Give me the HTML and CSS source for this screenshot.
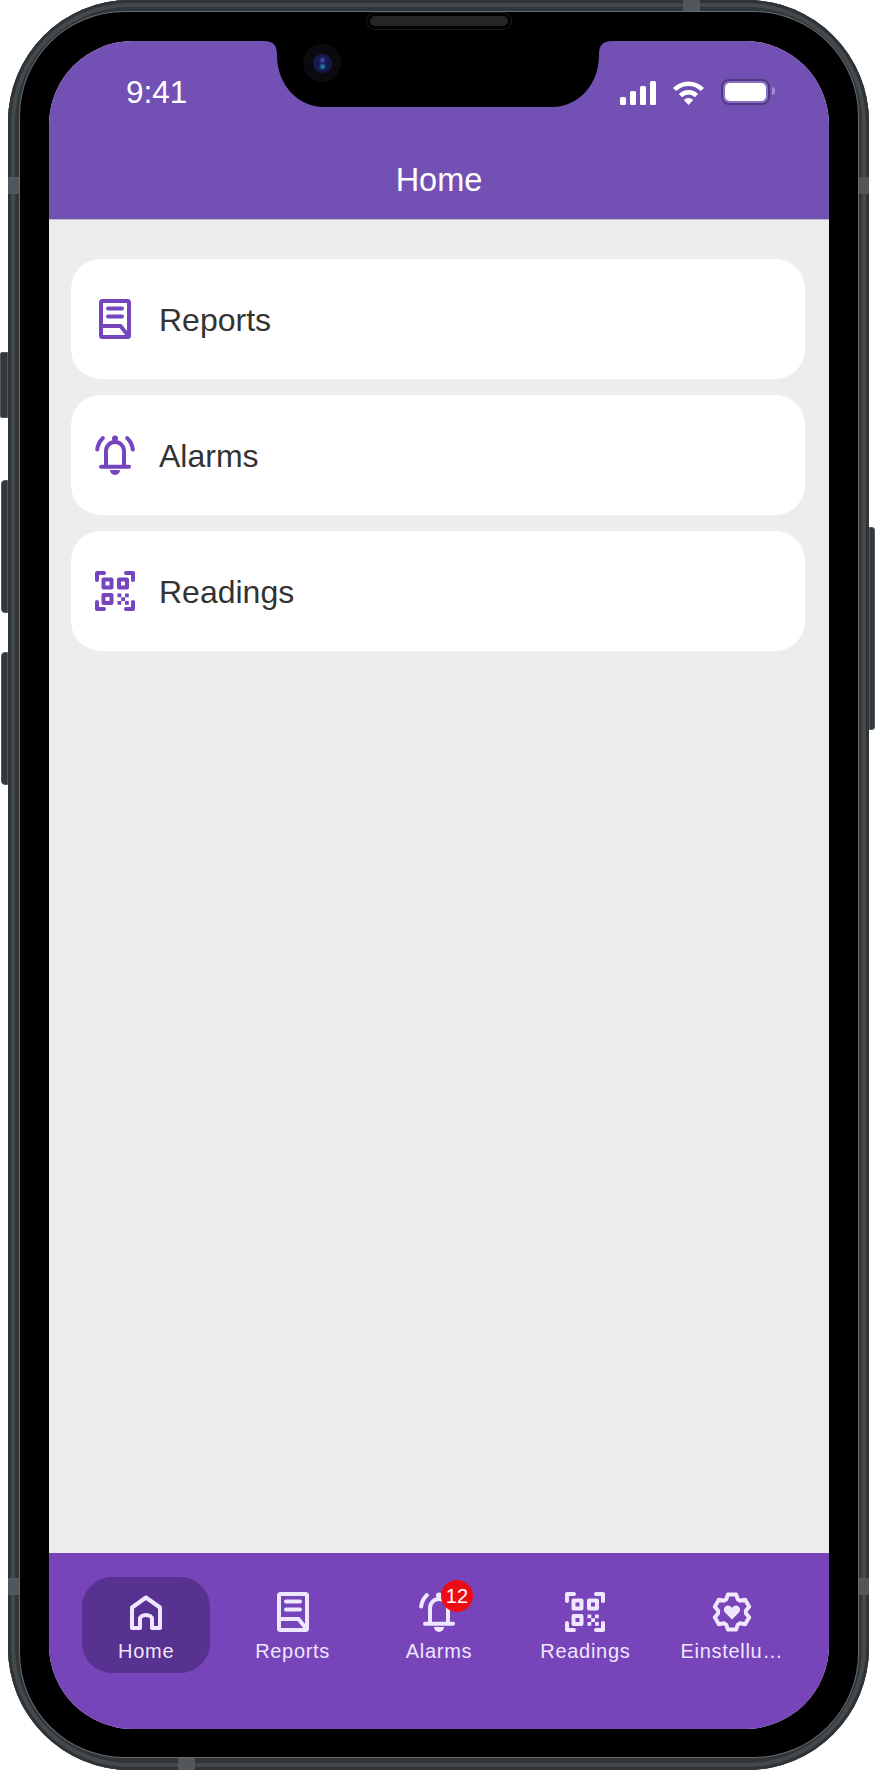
FILE: index.html
```html
<!DOCTYPE html>
<html lang="en">
<head>
    <meta charset="UTF-8">
    <meta name="viewport" content="width=device-width, initial-scale=1.0">
    <title>Home</title>
    <link rel="stylesheet" href="styles.css">
</head>
<body>
    <!-- icon sprite, all drawn on a 40x40 box -->
    <svg class="sprite" aria-hidden="true">
        <symbol id="icon-home" viewBox="0 0 40 40">
            <path d="M6 36V15.500L20 5.500l14 10V36H26v-9a6 4 0 0 0-12 0v9z"/>
        </symbol>
        <symbol id="icon-reports" viewBox="0 0 40 40">
            <rect x="6" y="2" width="28" height="36" rx="1.500"/>
            <path d="M13 9.500h14M13 17.500h14M6 27h19.500L33.500 37"/>
        </symbol>
        <symbol id="icon-bell" viewBox="0 0 40 40">
            <path d="M11 31.500V16a9 9 0 0 1 18 0v15.500M6 31.700h28M2.200 14.500Q3 8 7.800 3.200M37.800 14.500Q37 8 32.200 3.200"/>
            <circle class="solid" cx="20" cy="3.400" r="3"/>
            <path class="solid" d="M15 35h10a5 5 0 0 1-10 0z"/>
        </symbol>
        <symbol id="icon-qr" viewBox="0 0 40 40">
            <path d="M9 2H2V9M31 2h7V9M9 38H2V31M31 38h7V31"/>
            <rect x="8.500" y="8.500" width="8" height="8"/>
            <rect x="24" y="8.500" width="8" height="8"/>
            <rect x="8.500" y="24" width="8" height="8"/>
            <path class="solid" d="M22.500 22.500h3.800v3.800h-3.800zM30 22.500h3.800v3.800H30zM26.200 26.200h3.800V30h-3.800zM22.500 30h3.800v3.800h-3.800zM30 30h3.800v3.800H30z"/>
        </symbol>
        <symbol id="icon-settings" viewBox="0 0 40 40">
            <path d="M15.950 2.460H24.050L25.690 7.210 28.230 8.670 33.160 7.720 37.210 14.740 33.920 18.540V21.460L37.210 25.260 33.160 32.280 28.230 31.330 25.690 32.790 24.050 37.540H15.950L14.310 32.790 11.770 31.330 6.840 32.280 2.790 25.260 6.080 21.460V18.540L2.790 14.740 6.840 7.720 11.770 8.670 14.310 7.210z"/>
            <path class="solid" d="M20 27.500l-7-7c-2.500-3-.5-7 3-7 1.800 0 3.200 1 4 2.500.8-1.500 2.200-2.500 4-2.500 3.500 0 5.500 4 3 7z"/>
        </symbol>
    </svg>

    <div class="phone">
        <span class="side-btn mute"></span>
        <span class="side-btn vol-up"></span>
        <span class="side-btn vol-down"></span>
        <span class="side-btn power"></span>
        <span class="band band-lt"></span>
        <span class="band band-rt"></span>
        <span class="band band-lb"></span>
        <span class="band band-rb"></span>
        <span class="band band-top"></span>
        <span class="band band-bottom"></span>

        <div class="bezel">
            <div class="screen">
                <header class="app-header">
                    <div class="status-bar">
                        <span class="time">9:41</span>
                        <div class="status-icons">
                            <div class="signal">
                                <span class="bar-1"></span>
                                <span class="bar-2"></span>
                                <span class="bar-3"></span>
                                <span class="bar-4"></span>
                            </div>
                            <svg class="wifi" viewBox="0 0 35 24">
                                <path d="M3.600 8.500A19.500 19.500 0 0 1 31.400 8.500M9.500 14.600A11.300 11.300 0 0 1 25.500 14.600" fill="none" stroke="#fff" stroke-width="4.600"/>
                                <path d="M12.800 19A6.600 6.600 0 0 1 22.200 19L17.500 24z" fill="#fff"/>
                            </svg>
                            <div class="battery"><span class="battery-level"></span></div>
                        </div>
                    </div>
                    <h1 class="title">Home</h1>
                </header>

                <main class="menu">
                    <a class="menu-card">
                        <svg class="icon"><use href="#icon-reports"/></svg>
                        <span>Reports</span>
                    </a>
                    <a class="menu-card">
                        <svg class="icon"><use href="#icon-bell"/></svg>
                        <span>Alarms</span>
                    </a>
                    <a class="menu-card">
                        <svg class="icon"><use href="#icon-qr"/></svg>
                        <span>Readings</span>
                    </a>
                </main>

                <nav class="tab-bar">
                    <a class="tab active">
                        <svg class="icon"><use href="#icon-home"/></svg>
                        <span>Home</span>
                    </a>
                    <a class="tab">
                        <svg class="icon"><use href="#icon-reports"/></svg>
                        <span>Reports</span>
                    </a>
                    <a class="tab">
                        <div class="tab-icon">
                            <svg class="icon"><use href="#icon-bell"/></svg>
                            <b class="badge">12</b>
                        </div>
                        <span>Alarms</span>
                    </a>
                    <a class="tab">
                        <svg class="icon"><use href="#icon-qr"/></svg>
                        <span>Readings</span>
                    </a>
                    <a class="tab">
                        <svg class="icon"><use href="#icon-settings"/></svg>
                        <span>Einstellu…</span>
                    </a>
                </nav>

                <!-- camera cut-out, lies over the header -->
                <svg class="notch" viewBox="0 0 348 66">
                    <path d="M0 0H348C338 0 335 5 335 14 335 44 314 66 288 66H60C34 66 13 44 13 14 13 5 10 0 0 0z" fill="#000"/>
                </svg>
                <span class="camera"><span class="lens"></span></span>
            </div>
            <span class="speaker"></span>
        </div>
    </div>
</body>
</html>
```

FILE: styles.css
```css
* {
    box-sizing: border-box;
}

body {
    margin: 0;
    background: #fff;
    font-family: "Liberation Sans", Arial, sans-serif;
}

.sprite {
    display: none;
}

/* phone frame */
.phone {
    position: relative;
    width: 861px;
    height: 1770px;
    margin-left: 8px;
    padding: 12px 11px 13px 12px;
    border-radius: 122px;
    background: #30363a;
    box-shadow: inset 0 0 0 3px #2f3437, inset 0 0 0 7px #43494c;
}

.bezel {
    position: relative;
    height: 100%;
    padding: 29px 29px 28px;
    border-radius: 104px;
    background: #000;
    box-shadow: 0 0 0 1px #666b6d;
}

.side-btn {
    position: absolute;
    width: 8px;
    background: #33383b;
    border: 1px solid #55595b;
}

.mute {
    left: -8px;
    top: 352px;
    height: 66px;
    border-radius: 2px 0 0 2px;
}

.vol-up {
    left: -7px;
    top: 480px;
    width: 7px;
    height: 133px;
    border-radius: 4px 0 0 4px;
}

.vol-down {
    left: -7px;
    top: 652px;
    width: 7px;
    height: 133px;
    border-radius: 4px 0 0 4px;
}

.power {
    right: -6px;
    top: 527px;
    width: 6px;
    height: 203px;
    border-radius: 0 3px 3px 0;
}

/* the pale antenna lines on the frame */
.band {
    position: absolute;
    background: #52575c;
}

.band-lt, .band-lb {
    left: 0;
    width: 12px;
    height: 17px;
}

.band-rt, .band-rb {
    right: 0;
    width: 11px;
    height: 17px;
}

.band-lt, .band-rt {
    top: 177px;
}

.band-lb, .band-rb {
    top: 1578px;
}

.band-top, .band-bottom {
    width: 17px;
    height: 12px;
}

.band-top {
    top: 0;
    left: 675px;
}

.band-bottom {
    bottom: 0;
    left: 170px;
}

.speaker {
    position: absolute;
    top: 4px;
    left: 350px;
    width: 138px;
    height: 10px;
    border-radius: 5px;
    background: #252525;
    box-shadow: 0 0 0 3px #000, 0 0 0 4px #1c1c1c;
}

/* screen */
.screen {
    position: relative;
    display: flex;
    flex-direction: column;
    height: 100%;
    overflow: hidden;
    border-radius: 84px;
    background: #ededed;
}

.notch {
    position: absolute;
    top: 0;
    left: 215px;
    width: 348px;
    height: 66px;
}

.camera {
    position: absolute;
    top: 3px;
    left: 254px;
    width: 38px;
    height: 38px;
    display: flex;
    align-items: center;
    justify-content: center;
    border-radius: 50%;
    background: #0b0a10;
}

.lens {
    width: 19px;
    height: 19px;
    border-radius: 50%;
    background:
        radial-gradient(circle at 50% 32%, #5a50c0 0, transparent 22%),
        radial-gradient(circle at 50% 66%, #2a9cc0 0, transparent 24%),
        #141a50;
}

.app-header {
    height: 179px;
    padding-top: 38px;
    background: #7350b3;
    border-bottom: 1px solid #bdb8c8;
    color: #fff;
}

.status-bar {
    display: flex;
    justify-content: space-between;
    align-items: center;
    height: 26px;
    padding: 0 59px 0 77px;
}

.time {
    font-size: 31.5px;
    line-height: 28px;
}

.status-icons {
    display: flex;
    align-items: flex-end;
    gap: 15px;
}

.signal {
    display: flex;
    align-items: flex-end;
    gap: 4px;
    height: 24px;
}

.signal span {
    width: 6px;
    border-radius: 1.5px;
    background: #fff;
}

.bar-1 { height: 8px; }
.bar-2 { height: 14px; }
.bar-3 { height: 19px; }
.bar-4 { height: 24px; }

.wifi {
    width: 35px;
    height: 24px;
}

.battery {
    position: relative;
    width: 49px;
    height: 26px;
    padding: 2px;
    border: 2px solid #4f3a80;
    border-radius: 8px;
    background: #8b6fc4;
}

.battery::after {
    content: "";
    position: absolute;
    top: 6px;
    right: -7px;
    width: 3px;
    height: 8px;
    border-radius: 0 3px 3px 0;
    background: #a48cd4;
}

.battery-level {
    display: block;
    height: 100%;
    border-radius: 5px;
    background: #fff;
}

.title {
    margin: 0;
    padding-top: 57px;
    font-size: 32.5px;
    font-weight: normal;
    line-height: 36px;
    text-align: center;
}

/* home menu */
.menu {
    flex: 1;
    display: flex;
    flex-direction: column;
    gap: 16px;
    padding: 39px 24px 0 22px;
}

.icon {
    display: block;
    width: 40px;
    height: 40px;
    fill: none;
    stroke: currentColor;
    stroke-width: 4;
    stroke-linecap: round;
    stroke-linejoin: round;
}

.solid {
    fill: currentColor;
    stroke: none;
}

.menu-card {
    display: flex;
    align-items: center;
    gap: 24px;
    height: 120px;
    padding-left: 24px;
    border-radius: 30px;
    background: #fff;
    color: #333;
    font-size: 32px;
}

.menu-card span {
    padding-top: 2px;
}

.menu-card .icon {
    color: #7545bd;
}

/* bottom navigation */
.tab-bar {
    display: grid;
    grid-template-columns: repeat(5, 1fr);
    height: 176px;
    padding: 24px 24px 0;
    background: #7745b9;
}

.tab {
    display: flex;
    flex-direction: column;
    align-items: center;
    height: 96px;
    margin: 0 9px;
    padding-top: 15px;
    border-radius: 30px;
    color: #efe6ff;
    font-size: 20px;
    letter-spacing: 0.7px;
    line-height: 24px;
    white-space: nowrap;
}

.tab span {
    margin-top: 7px;
}

.tab.active {
    background: #583290;
}

.tab-icon {
    position: relative;
}

.badge {
    position: absolute;
    top: -12px;
    left: 22px;
    width: 32px;
    height: 32px;
    border-radius: 50%;
    background: #ee0c14;
    color: #fff;
    font-size: 20px;
    font-weight: normal;
    letter-spacing: 0;
    line-height: 32px;
    text-align: center;
}
```
